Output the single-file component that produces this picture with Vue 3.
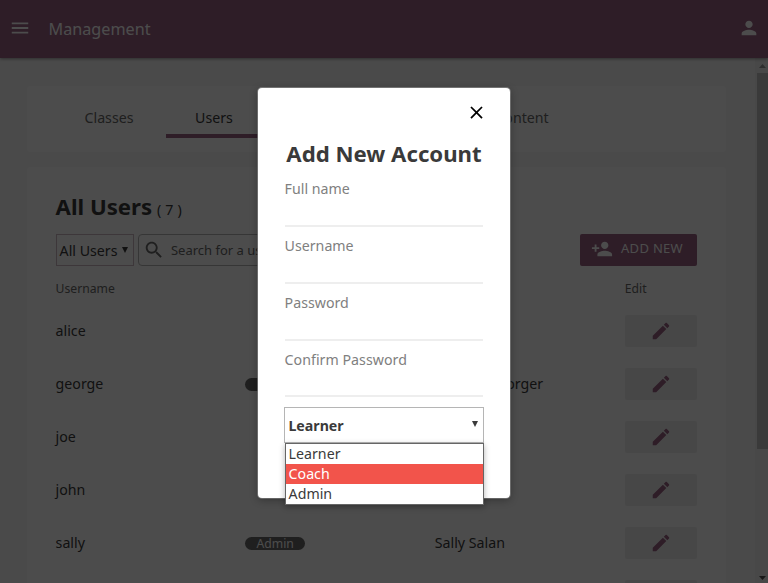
<script setup>
const tabs = ['Classes', 'Users', 'Data', 'Groups', 'Content']
const users = [
  { id: 1, name: 'alice', role: '', full: '' },
  { id: 2, name: 'george', role: 'Coach', full: 'George Georger' },
  { id: 3, name: 'joe', role: '', full: '' },
  { id: 4, name: 'john', role: '', full: '' },
  { id: 5, name: 'sally', role: 'Admin', full: 'Sally Salan' },
  { id: 6, name: '', role: '', full: '' },
]
const fields = ['Full name', 'Username', 'Password', 'Confirm Password']
const roles = ['Learner', 'Coach', 'Admin']
</script>

<template>
  <div class="app">
    <header class="bar">
      <svg class="icon" viewBox="0 0 24 24"><path d="M3 18h18v-2H3v2zm0-5h18v-2H3v2zm0-7v2h18V6H3z" /></svg>
      <span class="title">Management</span>
      <svg class="icon" viewBox="0 0 24 24"><path d="M12 12c2.21 0 4-1.79 4-4s-1.79-4-4-4-4 1.79-4 4 1.79 4 4 4zm0 2c-2.67 0-8 1.34-8 4v2h16v-2c0-2.66-5.33-4-8-4z" /></svg>
    </header>

    <div class="body">
      <main class="content">
        <nav class="card tabs">
          <span v-for="t in tabs" :key="t" class="tab" :class="{ active: t === 'Users' }">{{ t }}</span>
        </nav>
        <section class="card users">
          <h1>All Users <span class="count">( 7 )</span></h1>
          <div class="tools">
            <div class="filter"><span>All Users</span><svg class="caret" viewBox="0 0 6 6"><path d="M0 0h6L3 6z" /></svg></div>
            <div class="search">
              <svg class="icon" viewBox="0 0 24 24"><path d="M15.5 14h-.79l-.28-.27C15.41 12.59 16 11.11 16 9.5 16 5.91 13.09 3 9.5 3S3 5.91 3 9.5 5.91 16 9.5 16c1.61 0 3.09-.59 4.23-1.57l.27.28v.79l5 4.99L20.49 19l-4.99-5zm-6 0C7.01 14 5 11.99 5 9.5S7.01 5 9.5 5 14 7.01 14 9.5 11.99 14 9.5 14z" /></svg>
              <span>Search for a user...</span>
            </div>
            <button class="add">
              <svg class="icon" viewBox="0 0 24 24"><path d="M15 12c2.21 0 4-1.79 4-4s-1.79-4-4-4-4 1.79-4 4 1.79 4 4 4zm-9-2V7H4v3H1v2h3v3h2v-3h3v-2H6zm9 4c-2.67 0-8 1.34-8 4v2h16v-2c0-2.66-5.33-4-8-4z" /></svg>
              <span>ADD NEW</span>
            </button>
          </div>
          <div class="row head"><span>Username</span><span></span><span></span><span>Edit</span></div>
          <div v-for="u in users" :key="u.id" class="row">
            <span>{{ u.name }}</span>
            <span><b v-if="u.role" class="badge">{{ u.role }}</b></span>
            <span class="full">{{ u.full }}</span>
            <button class="edit">
              <svg class="icon" viewBox="0 0 24 24"><path d="M3 17.25V21h3.75L17.81 9.94l-3.75-3.75L3 17.25zM20.71 7.04c.39-.39.39-1.02 0-1.41l-2.34-2.34c-.39-.39-1.02-.39-1.41 0l-1.83 1.83 3.75 3.75 1.83-1.83z" /></svg>
            </button>
          </div>
        </section>
      </main>
      <div class="scroll">
        <svg class="arrow" viewBox="0 0 7 4"><path d="M0 4L3.5 0 7 4z" /></svg>
        <div class="thumb"></div>
        <svg class="arrow dark" viewBox="0 0 7 4"><path d="M0 0L3.5 4 7 0z" /></svg>
      </div>
    </div>

    <div class="overlay">
      <div class="modal">
        <svg class="close" viewBox="0 0 24 24"><path d="M19 6.41L17.59 5 12 10.59 6.41 5 5 6.41 10.59 12 5 17.59 6.41 19 12 13.41 17.59 19 19 17.59 13.41 12z" /></svg>
        <h2>Add New Account</h2>
        <label v-for="f in fields" :key="f" class="field">{{ f }}</label>
        <div class="select">
          <span>Learner</span>
          <svg class="caret" viewBox="0 0 6 6"><path d="M0 0h6L3 6z" /></svg>
          <ul class="options">
            <li v-for="r in roles" :key="r" :class="{ hot: r === 'Coach' }">{{ r }}</li>
          </ul>
        </div>
      </div>
    </div>
  </div>
</template>

<style>
body { overflow: hidden; }
</style>

<style scoped>
* { box-sizing: border-box; }
.app { position: relative; height: 583px; overflow: hidden; display: flex; flex-direction: column; background: #f9f9f9; color: #3a3a3a; font: 14.2px/20px "Noto Sans", sans-serif; }
.icon { width: 22px; height: 22px; flex: none; fill: currentColor; }
.bar { position: relative; z-index: 1; display: flex; align-items: center; height: 58px; flex: none; padding: 0 8.5px 2px 9px; background: #996182; color: #fff; box-shadow: 0 1px 3px rgba(0, 0, 0, .4); }
.title { flex: 1; margin: 1px 0 -1px 17.5px; font-size: 16.2px; line-height: 24px; }
.body { flex: 1; min-height: 0; display: flex; }
.content { flex: 1; padding: 28px 29px 0 27px; overflow: hidden; }
.card { background: #fff; border-radius: 4px; }
.tabs { display: flex; gap: 7px; height: 66px; padding: 14px 0 0 34px; }
.tab { width: 96px; height: 38px; flex: none; line-height: 36px; text-align: center; color: #686868; }
.tab:first-child { margin-right: 2px; }
.tab:last-child { margin-left: -1px; }
.active { border-bottom: 4px solid #996182; color: #3a3a3a; }
.users { margin-top: 15px; height: 480px; padding: 26px 29px 0 28.6px; }
h1 { margin: 0; font-size: 22.2px; line-height: 28px; font-weight: 700; white-space: nowrap; }
.count { font-size: 14.2px; font-weight: 400; margin-left: -1px; letter-spacing: .2px; }
.tools { display: flex; height: 32px; margin-top: 10px; }
.filter { width: 78px; border: 1px solid #ccb8c4; display: flex; align-items: center; justify-content: space-between; padding: 2px 5px 0 3px; white-space: nowrap; }
.caret { width: 6px; height: 6px; flex: none; fill: #3a3a3a; }
.filter .caret { margin-bottom: 3px; }
.search { width: 240px; margin-left: 4px; border: 1px solid #b5b5b5; border-radius: 4px; display: flex; align-items: center; padding-left: 4.4px; font-size: 13px; color: #686868; }
.search span { margin-left: 6px; }
button { border: 0; font: inherit; padding: 0; display: flex; align-items: center; justify-content: center; }
.add { width: 117px; margin-left: auto; background: #996182; color: #fff; border-radius: 2px; font-size: 13px; padding: 0 3px 3px 0; }
.add span { margin: -1px 0 0 8px; letter-spacing: .3px; }
.row { display: grid; grid-template-columns: 189.6px 189.6px 190px 72px; align-items: center; height: 53px; }
.head { height: 46px; font-size: 12.2px; color: #686868; padding-bottom: 1px; margin-bottom: -8px; }
.full { white-space: nowrap; }
.badge { display: block; width: 60px; height: 13px; border-radius: 7px; margin-top: 1px; background: #686868; color: #fff; font-size: 12.2px; line-height: 13px; font-weight: 400; text-align: center; }
.edit { height: 32px; border-radius: 2px; background: #eee; color: #996182; }
.scroll { width: 13px; background: #f1f1f1; display: flex; flex-direction: column; align-items: flex-end; padding: 6px 0 3px; }
.arrow { width: 7px; height: 4px; fill: #999; margin-right: 2px; flex: none; }
.dark { fill: #505050; }
.thumb { width: 11px; height: 376px; margin: 5px 0 auto; background: #c1c1c1; }
.overlay { position: absolute; inset: 0; z-index: 2; background: rgba(0, 0, 0, .7); display: flex; justify-content: center; align-items: flex-start; padding-top: 88px; }
.modal { width: 252px; height: 410px; background: #fff; border-radius: 4px; padding: 14px 26.6px 0; display: flex; flex-direction: column; box-shadow: 0 2px 8px rgba(0, 0, 0, .33), 0 0 0 1px rgba(150, 150, 150, .7); }
.close { width: 21px; height: 21px; align-self: flex-end; margin: 0 -4px 0 0; }
h2 { margin: 16px 0 10px; font-size: 22.2px; line-height: 30px; text-align: center; white-space: nowrap; }
.field { height: 48px; flex: none; border-bottom: 2px solid #eee; margin-bottom: 9px; color: #808080; }
.field:nth-of-type(4) { height: 47px; letter-spacing: .03px; }
.select { position: relative; height: 36px; margin: 1px -.4px 0 -.4px; flex: none; border: 1px solid #b5b5b5; display: flex; align-items: center; justify-content: space-between; padding: 2px 5px 0 3.2px; font-weight: 700; }
.select .caret { margin-bottom: 4px; }
.options { position: absolute; left: -.2px; top: 35px; width: 199px; margin: 0; padding: 0; list-style: none; border: 1px solid #666; background: #fff; font-weight: 400; box-shadow: 0 2px 6px rgba(0, 0, 0, .3); }
.options li { height: 20px; line-height: 20px; padding-left: 2.6px; }
.hot { background: #f2544b; color: #fff; }
</style>
